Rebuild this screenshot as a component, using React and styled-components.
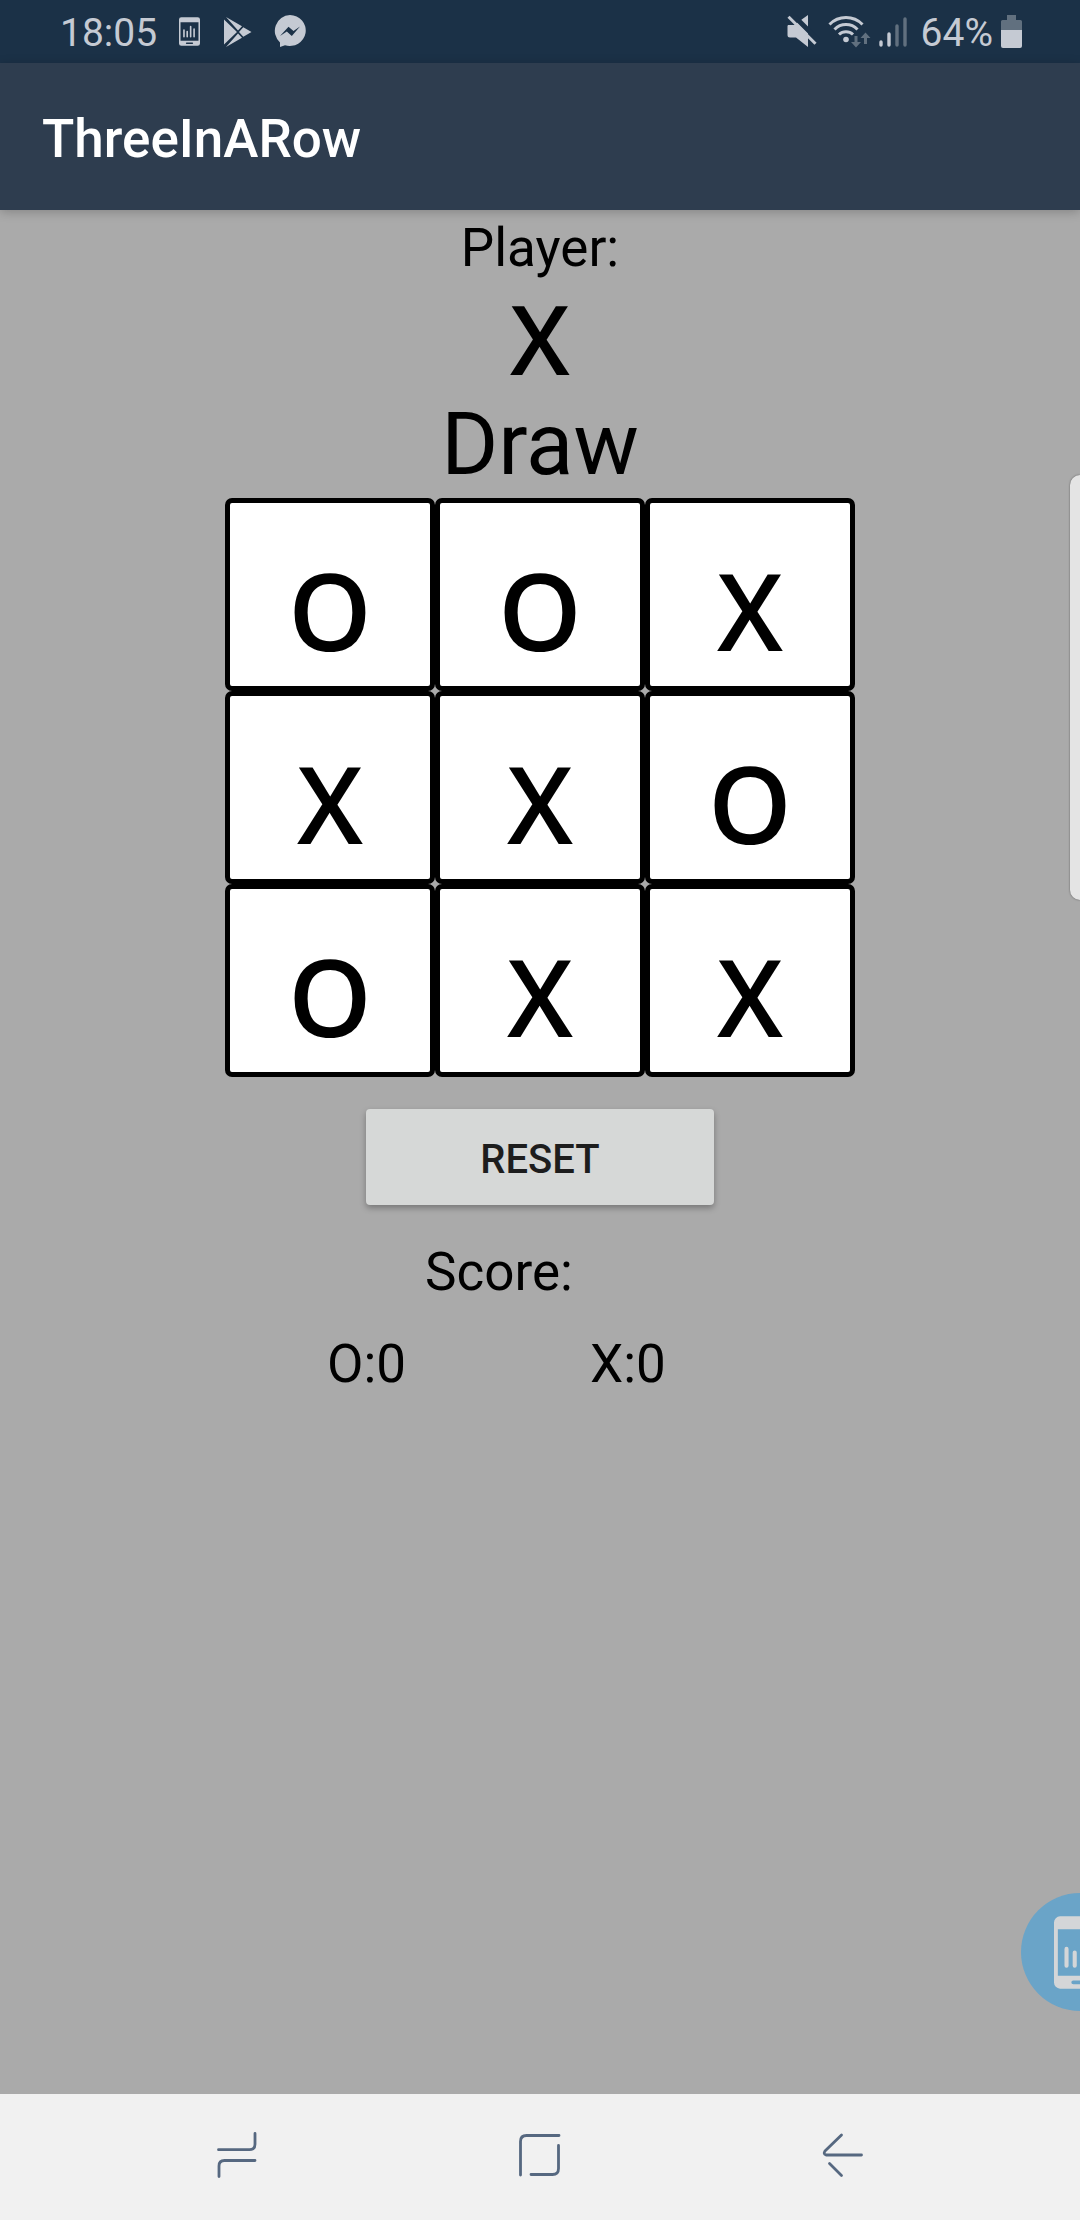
import React, { useState } from "react";
import styled, { createGlobalStyle } from "styled-components";

const Global = createGlobalStyle`
  * { box-sizing: border-box; }
  body { margin: 0; background: #aaaaaa; font-family: Roboto, "Liberation Sans", sans-serif; }
  button { font-family: inherit; border: 0; padding: 0; cursor: pointer; }
  svg { display: block; }
`;

const Screen = styled.div`
  min-height: 100vh;
  display: flex;
  flex-direction: column;
  overflow-x: hidden;
  color: #000;
`;

const StatusBar = styled.div`
  height: 63px;
  padding: 0 58px 0 60px;
  display: flex;
  align-items: center;
  justify-content: space-between;
  background: #1b3147;
  color: #c5cad3;
  font-size: 39px;
  line-height: 44px;
`;

const StatusGroup = styled.div`
  display: flex;
  align-items: center;
  gap: ${(p) => p.$gap}px;
`;

const StatusText = styled.span`
  padding-top: 2px;
`;

const AppBar = styled.header`
  height: 147px;
  padding: 4px 42px 0;
  display: flex;
  align-items: center;
  background: #2e3d4f;
  box-shadow: 0 2px 10px rgba(0, 0, 0, 0.22);
`;

const Title = styled.h1`
  margin: 0;
  font-size: 53px;
  font-weight: 500;
  line-height: 72px;
  color: #fff;
`;

const Main = styled.main`
  flex: 1;
  display: flex;
  flex-direction: column;
  align-items: center;
`;

const Label = styled.div`
  font-size: 53px;
  line-height: 76px;
`;

const CurrentPlayer = styled.div`
  padding-bottom: 8px;
  font-family: "Open Sans", "Noto Sans", sans-serif;
  font-size: 96px;
  font-weight: 600;
  line-height: 104px;
`;

const Result = styled.div`
  padding-bottom: 8px;
  font-size: 87px;
  line-height: 92px;
`;

const Board = styled.div`
  display: grid;
  grid-template-columns: repeat(3, 210px);
  grid-auto-rows: 193px;
`;

const Cell = styled.button`
  && { padding: 30px 0 0; border: 5px solid #000; }
  border-radius: 7px;
  background: #fff;
  color: #000;
  font-family: "Open Sans", "Noto Sans", sans-serif;
  font-size: 106px;
  font-weight: 600;
  line-height: 144px;
`;

const ResetButton = styled.button`
  && { padding-top: 4px; }
  width: 348px;
  height: 96px;
  margin: 32px 0;
  border-radius: 4px;
  background: #d6d8d7;
  color: #1d1d1d;
  font-size: 40px;
  font-weight: 500;
  text-transform: uppercase;
  box-shadow: 0 3px 6px rgba(0, 0, 0, 0.3);
`;

const Scores = styled.section`
  width: 526px;
  display: grid;
  grid-template-columns: 1fr 1fr;
  row-gap: 22px;
  font-size: 53px;
  line-height: 70px;
`;

const ScoreTitle = styled.h2`
  grid-column: 1 / -1;
  margin: 0;
  padding-left: 148px;
  font: inherit;
`;

const Score = styled.div`
  padding-left: 50px;
`;

const EdgeHandle = styled.div`
  position: fixed;
  top: 475px;
  right: 0;
  width: 10px;
  height: 425px;
  border-radius: 12px 0 0 12px;
  background: #e4e4e4;
  box-shadow: 0 0 2px rgba(0, 0, 0, 0.5);
`;

const Bubble = styled.button`
  position: fixed;
  right: -59px;
  bottom: 209px;
  width: 118px;
  height: 118px;
  border-radius: 50%;
  background: #6aa4c8;
  color: #d4d6d8;
  display: grid;
  place-items: center;
`;

const NavBar = styled.nav`
  height: 126px;
  padding: 0 86px 4px;
  display: grid;
  grid-template-columns: repeat(3, 1fr);
  background: #f1f1f1;
`;

const NavButton = styled.button`
  display: grid;
  place-items: center;
  background: none;
  color: #566880;
`;

const ReportIcon = ({ width, height }) => (
  <svg width={width} height={height} viewBox="0 0 22 30" fill="currentColor" aria-hidden="true">
    <path fillRule="evenodd" d="M2.500 0h17A2.500 2.500 0 0 1 22 2.500v25a2.500 2.500 0 0 1-2.500 2.500h-17A2.500 2.500 0 0 1 0 27.500v-25A2.500 2.500 0 0 1 2.500 0zM1.600 5.400v19.300h18.800V5.400zM8 26.600a.8.8 0 0 0 0 1.600h6a.8.8 0 0 0 0-1.600z" />
    <g stroke="currentColor" strokeWidth="1.700" strokeLinecap="round">
      <path d="M5.200 13.500v7M8.600 15v5.500M12.200 9.800v10.700M15.800 12.500v8" />
    </g>
  </svg>
);

const PlayIcon = () => (
  <svg width="30" height="32" viewBox="-1 0 30 32" fill="currentColor" aria-hidden="true">
    <path d="M1 3.500v25L14 16zM3 1l12 13.500 4-4.300zM15 17.500 3 31l16-9.200zM20.300 11.200 16 16l4.300 4.800L28.500 16z" />
  </svg>
);

const MessengerIcon = () => (
  <svg width="32" height="33" viewBox="0 0 32 33" aria-hidden="true">
    <path fill="currentColor" d="M16 0a16 15.500 0 1 1-5 30.300L6 32v-4.500A15.800 15.800 0 0 1 16 0z" />
    <path fill="#1b3147" d="M6 21l8.500-9.200 5 4.300L26 11.500 17.800 21l-5-4.400z" />
  </svg>
);

const MuteIcon = () => (
  <svg width="33" height="33" viewBox="0 0 33 33" aria-hidden="true">
    <path fill="currentColor" d="M1 10h6l14-10v32L9 22.500H3a2.500 2.500 0 0 1-2.500-2.500v-9z" />
    <path stroke="#1b3147" strokeWidth="5" d="M5 -1l27 27" />
    <path stroke="currentColor" strokeWidth="3" d="M1.500 1.800l27 27" />
  </svg>
);

const WifiIcon = () => (
  <svg width="43" height="34" viewBox="0 0 43 34" fill="none" aria-hidden="true">
    <g stroke="currentColor" strokeWidth="3">
      <path d="M1.500 9.500a23 23 0 0 1 33 0M6.500 14.500a16 16 0 0 1 23 0M11 19.500a10 10 0 0 1 14 0" />
    </g>
    <circle cx="18" cy="24.500" r="2.800" fill="currentColor" />
    <g fill="#61707f">
      <path d="M26.500 21h3v6h3.500l-5 5.500-5-5.500h3.500z" />
      <path d="M36 29h3v-6h3.500l-5-5.500-5 5.500H36z" />
    </g>
  </svg>
);

const SignalIcon = () => (
  <svg width="34" height="32" viewBox="0 0 34 32" strokeWidth="3.400" strokeLinecap="round" aria-hidden="true">
    <path stroke="currentColor" d="M2 26v3M10 18v11" />
    <path stroke="#61707f" d="M18 10v19M26 3v26" />
  </svg>
);

const BatteryIcon = () => (
  <svg width="21" height="33" viewBox="0 0 21 33" aria-hidden="true">
    <path fill="#61707f" d="M6 0h9v5h4.500A1.500 1.500 0 0 1 21 6.500V16H0V6.500A1.500 1.500 0 0 1 1.500 5H6z" />
    <path fill="currentColor" d="M0 15h21v16a2 2 0 0 1-2 2H2a2 2 0 0 1-2-2z" />
  </svg>
);

const NavIcon = ({ d }) => (
  <svg width="44" height="48" viewBox="0 0 44 48" fill="none" stroke="currentColor" strokeWidth="2.800" strokeLinecap="round" strokeLinejoin="round" aria-hidden="true">
    <path d={d} />
  </svg>
);

const finished = ["O", "O", "X", "X", "X", "O", "O", "X", "X"];

export default function App() {
  const [cells, setCells] = useState(finished);
  const [player, setPlayer] = useState("X");
  const full = cells.every(Boolean);

  const play = (i) => {
    if (cells[i]) return;
    setCells(cells.map((c, n) => (n === i ? player : c)));
    setPlayer(player === "X" ? "O" : "X");
  };

  return (
    <Screen>
      <Global />
      <StatusBar>
        <StatusGroup $gap={22}>
          <StatusText>18:05</StatusText>
          <ReportIcon width={21} height={29} />
          <PlayIcon />
          <MessengerIcon />
        </StatusGroup>
        <StatusGroup $gap={8}>
          <MuteIcon />
          <WifiIcon />
          <SignalIcon />
          <StatusText>64%</StatusText>
          <BatteryIcon />
        </StatusGroup>
      </StatusBar>
      <AppBar>
        <Title>ThreeInARow</Title>
      </AppBar>
      <Main>
        <Label>Player:</Label>
        <CurrentPlayer>{player}</CurrentPlayer>
        <Result>{full ? "Draw" : "\u00a0"}</Result>
        <Board>
          {cells.map((mark, i) => (
            <Cell key={i} type="button" aria-label={`Cell ${i + 1}: ${mark || "empty"}`} onClick={() => play(i)}>
              {mark}
            </Cell>
          ))}
        </Board>
        <ResetButton type="button" onClick={() => setCells(Array(9).fill(""))}>Reset</ResetButton>
        <Scores>
          <ScoreTitle>Score:</ScoreTitle>
          <Score>O:0</Score>
          <Score>X:0</Score>
        </Scores>
      </Main>
      <NavBar>
        <NavButton type="button" aria-label="Recent apps">
          <NavIcon d="M3.500 18.700h31q5.500 0 5.500-5.500V2.500M4 45.500V35q0-5.500 5.500-5.500H40" />
        </NavButton>
        <NavButton type="button" aria-label="Home">
          <NavIcon d="M2.500 44V10.500q0-6 6-6h32.500M40.500 14.500v23q0 6-6 6H13" />
        </NavButton>
        <NavButton type="button" aria-label="Back">
          <NavIcon d="M40.500 24H5q-3-1-1-4L20.500 4M8.500 32.500l12 12" />
        </NavButton>
      </NavBar>
      <EdgeHandle />
      <Bubble type="button" aria-label="Report">
        <ReportIcon width={53} height={73} />
      </Bubble>
    </Screen>
  );
}
